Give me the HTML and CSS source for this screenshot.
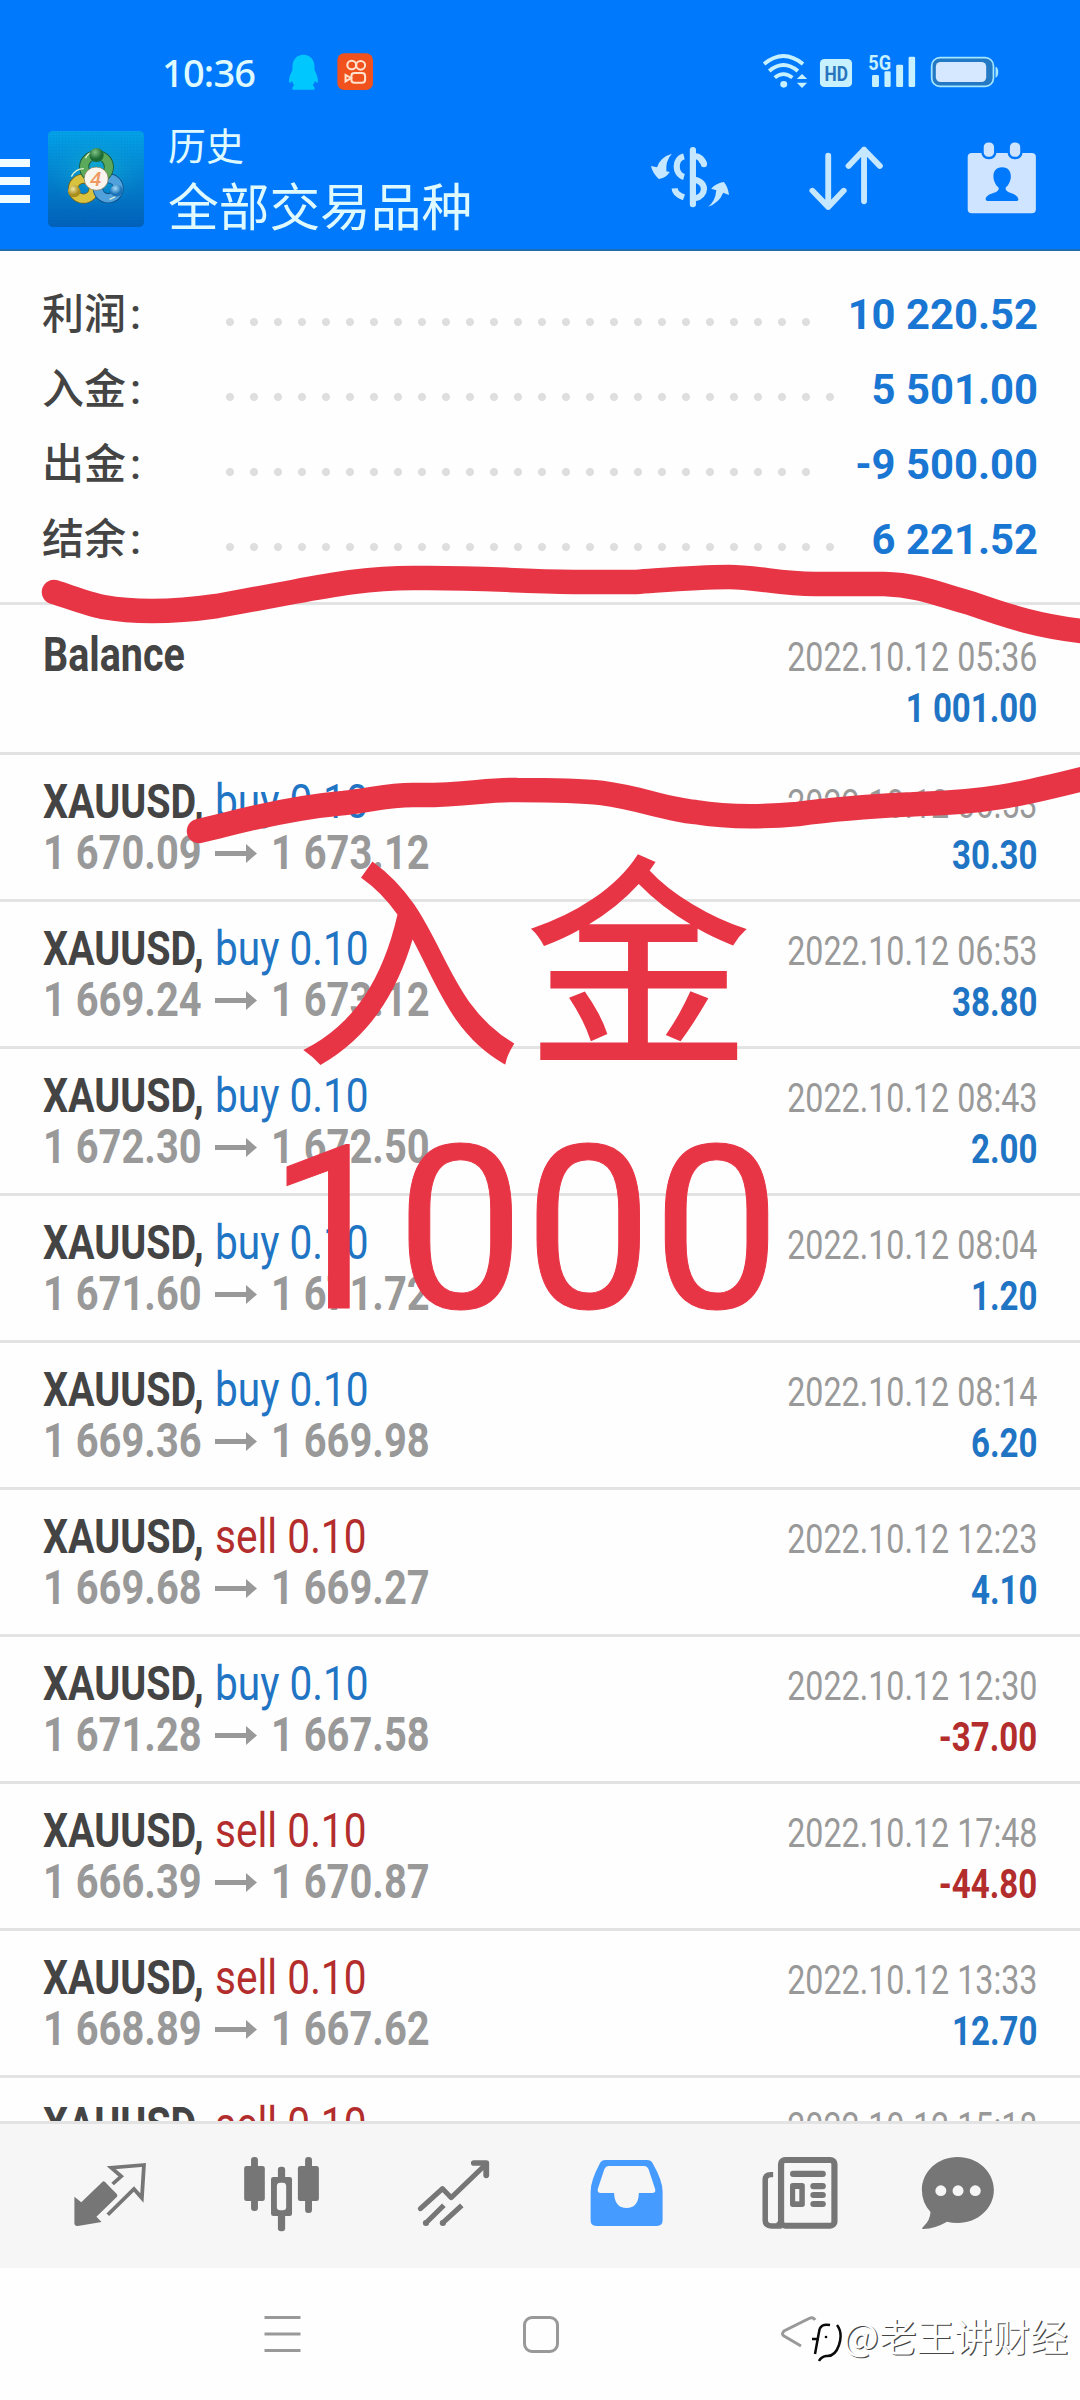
FILE: index.html
```html
<!DOCTYPE html>
<html lang="zh-CN">
<head>
<meta charset="utf-8">
<title>历史</title>
<link rel="stylesheet" href="styles.css">
</head>
<body>
<div class="screen">
<header class="top">
  <div class="status">
    <span class="clock">10:36</span>
    <svg class="qq" viewBox="835 70 93 114" preserveAspectRatio="none"><path fill="#00c8ff" d="M880 75c-20 0-32 15-32 36v10c-5 10-11 22-10 37 3 3 6-1 9-5 1 6 3 10 7 14-5 3-7 7-6 13h64c1-6-1-10-6-13 4-4 6-8 7-14 3 4 6 8 9 5 1-15-5-27-10-37v-10c0-21-12-36-32-36z"/></svg>
    <svg class="ks" viewBox="978 70 108 114" preserveAspectRatio="none"><rect x="979" y="71" width="104" height="110" rx="20" fill="#f0511d"/><g fill="none" stroke="#ffe3cf" stroke-width="6"><circle cx="1021" cy="106" r="13"/><circle cx="1047" cy="107" r="13"/><rect x="1020" y="130" width="40" height="29" rx="9"/><path d="M1019 145l-16-9v19z"/></g></svg>
    <svg class="signals" viewBox="645 66 690 114" preserveAspectRatio="none">
      <g fill="none" stroke="#c8f1ff" stroke-width="11"><path d="M651 102q56-48 113 0"/><path d="M666 123q41-36 83 0"/><path d="M682 143q25-21 51 0"/></g>
      <circle cx="708" cy="163" r="10" fill="#c8f1ff"/>
      <path fill="#c8f1ff" d="M761 132l15 15h-30zM761 174l15-16h-30z"/>
      <rect x="813" y="87" width="93" height="84" rx="13" fill="#c8f1ff"/>
      <text class="hd" x="826" y="152" textLength="68" lengthAdjust="spacingAndGlyphs">HD</text>
      <text class="fiveg" x="953" y="120" textLength="66" lengthAdjust="spacingAndGlyphs">5G</text>
      <g fill="#c8f1ff"><rect x="964" y="135" width="20" height="36" rx="4"/><rect x="1000" y="124" width="18" height="47" rx="4"/><rect x="1034" y="104" width="20" height="67" rx="4"/><rect x="1070" y="80" width="19" height="91" rx="4"/></g>
      <rect x="1137" y="83" width="179" height="86" rx="24" fill="#2379c4" stroke="#a5e6ff" stroke-width="5"/>
      <rect x="1149" y="96" width="146" height="60" rx="14" fill="#d6e8ff"/>
      <path d="M1322 110q8 2 8 16t-8 17z" fill="#a5e6ff"/>
    </svg>
  </div>
  <div class="toolbar">
    <div class="menu"><i></i><i></i><i></i></div>
    <svg class="logo" viewBox="139 303 279 288" preserveAspectRatio="none">
      <defs>
        <linearGradient id="bg" x1="0" y1="0" x2="0" y2="1"><stop offset="0" stop-color="#02a3ea"/><stop offset=".55" stop-color="#027dc9"/><stop offset="1" stop-color="#005fb9"/></linearGradient>
        <radialGradient id="glow"><stop offset="0" stop-color="#13b6d0" stop-opacity=".8"/><stop offset="1" stop-color="#0898d8" stop-opacity="0"/></radialGradient>
        <radialGradient id="gr" cx=".4" cy=".3"><stop offset="0" stop-color="#7fc384"/><stop offset="1" stop-color="#1c6a34"/></radialGradient>
        <radialGradient id="ye" cx=".4" cy=".3"><stop offset="0" stop-color="#f0e6a0"/><stop offset="1" stop-color="#a88c1c"/></radialGradient>
        <radialGradient id="bl" cx=".4" cy=".3"><stop offset="0" stop-color="#a5dcf8"/><stop offset="1" stop-color="#1b72b8"/></radialGradient>
        <pattern id="grid" width="9" height="9" patternUnits="userSpaceOnUse"><path d="M0 0h9M0 0v9" stroke="#0b6fb5" stroke-width="1.4" opacity=".45"/></pattern>
      </defs>
      <rect x="139" y="303" width="279" height="288" rx="14" fill="url(#bg)"/>
      <rect x="139" y="303" width="279" height="230" fill="url(#glow)"/>
      <rect x="139" y="303" width="279" height="288" rx="14" fill="url(#grid)"/>
      <circle cx="242" cy="476" r="30" fill="none" stroke="#6e6420" stroke-width="30"/>
      <circle cx="242" cy="476" r="30" fill="none" stroke="#d9c33e" stroke-width="25"/>
      <circle cx="314" cy="475" r="30" fill="none" stroke="#104f88" stroke-width="30"/>
      <circle cx="314" cy="475" r="30" fill="none" stroke="#51a2dc" stroke-width="25"/>
      <circle cx="280" cy="411" r="36" fill="none" stroke="#1c5a35" stroke-width="29"/>
      <circle cx="280" cy="411" r="36" fill="none" stroke="#5ba95a" stroke-width="24"/>
      <path d="M207 440q12-24 36-24M248 385q6-16 20-18M318 508q26-8 30-34" fill="none" stroke="#dff2d0" stroke-width="4"/>
      <circle cx="280" cy="375" r="21" fill="url(#gr)"/><circle cx="215" cy="484" r="18" fill="url(#ye)"/><circle cx="338" cy="482" r="18" fill="url(#bl)"/>
      <circle cx="279" cy="446" r="35" fill="#f8f4ee" stroke="#77714b" stroke-width="2"/>
      <text class="four" x="261" y="467">4</text>
    </svg>
    <div class="titles"><div class="t1">历史</div><div class="t2">全部交易品种</div></div>
    <div class="actions">
      <svg viewBox="290.4 300 290.4 300" preserveAspectRatio="none">
        <g fill="#c5e7ff"><path d="M383 371q-19 21-16 53l10 2q-12 19-32 21-17-16-23-39l18 4q9-31 43-41z"/><path d="M488 530q21-15 24-49l-15-5q15-17 37-20 12 15 15 39l-17-7q-12 31-44 42z"/></g>
        <g fill="none" stroke="#c5e7ff" stroke-width="18"><path d="M418 379c-28 7-28 54 0 62M391 475q1 18 27 27"/><path d="M444 360v163" stroke-linecap="round"/><path d="M448 378q22 1 29 26"/><path stroke-linecap="round" d="M470 392q6 5 6 11"/><path d="M448 449c38 6 36 50 2 56"/></g>
      </svg>
      <svg viewBox="743.4 300 290.4 300" preserveAspectRatio="none"><path d="M837 377v154M791 482l46 49 45-49M941 514V359M896 408l45-49 46 49" fill="none" stroke="#c5e7ff" stroke-width="17" stroke-linecap="round" stroke-linejoin="round"/></svg>
      <svg viewBox="1196.4 300 290.4 300" preserveAspectRatio="none"><rect x="1242" y="369" width="198" height="181" rx="12" fill="#cfe4ff"/><g fill="#cfe4ff" stroke="#0079fc" stroke-width="7"><rect x="1285" y="334" width="37" height="50" rx="17"/><rect x="1361" y="334" width="37" height="50" rx="17"/></g><path d="M1342 412c-34 0-30 45-10 61 2 20-33 12-38 34q0 6 6 6h83q7 0 6-6c-5-22-39-14-37-34 20-16 24-61-10-61z" fill="#0079fc"/></svg>
    </div>
  </div>
</header>

<section class="summary">
  <div class="sum"><span class="label">利润<b>:</b></span><span class="dots dots-25"></span><span class="total">10 220.52</span></div>
  <div class="sum"><span class="label">入金<b>:</b></span><span class="dots"></span><span class="total">5 501.00</span></div>
  <div class="sum"><span class="label">出金<b>:</b></span><span class="dots dots-25"></span><span class="total">-9 500.00</span></div>
  <div class="sum"><span class="label">结余<b>:</b></span><span class="dots"></span><span class="total">6 221.52</span></div>
</section>

<main class="deals">
  <div class="deal first"><div class="line"><span class="sym">Balance</span><span class="date">2022.10.12 05:36</span></div><div class="line"><span class="price"></span><span class="val">1 001.00</span></div></div>
  <div class="deal"><div class="line"><span class="sym">XAUUSD,</span><span class="op buy">buy 0.10</span><span class="date">2022.10.12 06:53</span></div><div class="line"><span class="price">1 670.09</span><svg class="arrow" viewBox="0 0 42 19"><path d="M0 7h31V0l11 9.500-11 9.500v-7H0z"/></svg><span class="price">1 673.12</span><span class="val">30.30</span></div></div>
  <div class="deal"><div class="line"><span class="sym">XAUUSD,</span><span class="op buy">buy 0.10</span><span class="date">2022.10.12 06:53</span></div><div class="line"><span class="price">1 669.24</span><svg class="arrow" viewBox="0 0 42 19"><path d="M0 7h31V0l11 9.500-11 9.500v-7H0z"/></svg><span class="price">1 673.12</span><span class="val">38.80</span></div></div>
  <div class="deal"><div class="line"><span class="sym">XAUUSD,</span><span class="op buy">buy 0.10</span><span class="date">2022.10.12 08:43</span></div><div class="line"><span class="price">1 672.30</span><svg class="arrow" viewBox="0 0 42 19"><path d="M0 7h31V0l11 9.500-11 9.500v-7H0z"/></svg><span class="price">1 672.50</span><span class="val">2.00</span></div></div>
  <div class="deal"><div class="line"><span class="sym">XAUUSD,</span><span class="op buy">buy 0.10</span><span class="date">2022.10.12 08:04</span></div><div class="line"><span class="price">1 671.60</span><svg class="arrow" viewBox="0 0 42 19"><path d="M0 7h31V0l11 9.500-11 9.500v-7H0z"/></svg><span class="price">1 671.72</span><span class="val">1.20</span></div></div>
  <div class="deal"><div class="line"><span class="sym">XAUUSD,</span><span class="op buy">buy 0.10</span><span class="date">2022.10.12 08:14</span></div><div class="line"><span class="price">1 669.36</span><svg class="arrow" viewBox="0 0 42 19"><path d="M0 7h31V0l11 9.500-11 9.500v-7H0z"/></svg><span class="price">1 669.98</span><span class="val">6.20</span></div></div>
  <div class="deal"><div class="line"><span class="sym">XAUUSD,</span><span class="op sell">sell 0.10</span><span class="date">2022.10.12 12:23</span></div><div class="line"><span class="price">1 669.68</span><svg class="arrow" viewBox="0 0 42 19"><path d="M0 7h31V0l11 9.500-11 9.500v-7H0z"/></svg><span class="price">1 669.27</span><span class="val">4.10</span></div></div>
  <div class="deal"><div class="line"><span class="sym">XAUUSD,</span><span class="op buy">buy 0.10</span><span class="date">2022.10.12 12:30</span></div><div class="line"><span class="price">1 671.28</span><svg class="arrow" viewBox="0 0 42 19"><path d="M0 7h31V0l11 9.500-11 9.500v-7H0z"/></svg><span class="price">1 667.58</span><span class="val loss">-37.00</span></div></div>
  <div class="deal"><div class="line"><span class="sym">XAUUSD,</span><span class="op sell">sell 0.10</span><span class="date">2022.10.12 17:48</span></div><div class="line"><span class="price">1 666.39</span><svg class="arrow" viewBox="0 0 42 19"><path d="M0 7h31V0l11 9.500-11 9.500v-7H0z"/></svg><span class="price">1 670.87</span><span class="val loss">-44.80</span></div></div>
  <div class="deal"><div class="line"><span class="sym">XAUUSD,</span><span class="op sell">sell 0.10</span><span class="date">2022.10.12 13:33</span></div><div class="line"><span class="price">1 668.89</span><svg class="arrow" viewBox="0 0 42 19"><path d="M0 7h31V0l11 9.500-11 9.500v-7H0z"/></svg><span class="price">1 667.62</span><span class="val">12.70</span></div></div>
  <div class="deal"><div class="line"><span class="sym">XAUUSD,</span><span class="op sell">sell 0.10</span><span class="date">2022.10.12 15:18</span></div></div>
</main>

<nav class="tabs">
  <svg viewBox="174.2 255 290.4 300" preserveAspectRatio="none"><path fill="#767676" d="M216 410l20 17 61-61q4-4 8 0l34 36q4 5 0 9l-59 59 15 16-69 12q-10 1-10-9z"/><path d="M327 372l25-23-29-26 95-8-6 99-23-27-76 77" fill="none" stroke="#767676" stroke-width="11"/></svg>
  <svg viewBox="673.7 255 290.4 300" preserveAspectRatio="none"><g fill="#767676"><rect x="709" y="318" width="60" height="105" rx="7"/><rect x="729" y="291" width="20" height="162" rx="9"/><rect x="865" y="318" width="61" height="105" rx="7"/><rect x="886" y="291" width="20" height="168" rx="9"/><rect x="787" y="351" width="61" height="117" rx="7"/><rect x="807" y="320" width="21" height="194" rx="9"/></g><rect x="804" y="368" width="27" height="83" rx="10" fill="#f6f6f6"/></svg>
  <svg viewBox="1173.2 255 290.4 300" preserveAspectRatio="none"><g fill="none" stroke="#767676" stroke-width="15"><path stroke-linecap="round" stroke-linejoin="round" d="M1221 446l64-60 25 27 98-97"/><path d="M1376 309h36v37" stroke-width="17" stroke-linecap="round" stroke-linejoin="round"/><path d="M1236 490l53-54M1284 490l57-54"/></g><g fill="#767676"><circle cx="1237" cy="489" r="9"/><circle cx="1286" cy="489" r="9"/></g></svg>
  <svg viewBox="104.5 255 290.4 300" preserveAspectRatio="none"><path fill-rule="evenodd" fill="#459bff" d="M190 300h121q11 0 16 10 29 52 29 85v86q0 17-17 17H163q-16 0-16-17v-86q0-33 27-85 5-10 16-10zM199 318q-8 0-12 9l-19 59q-3 13 9 13h38q2 45 36 45 35 0 36-45h38q13 0 9-13l-19-59q-4-9-12-9z"/></svg>
  <svg viewBox="604 255 290.4 300" preserveAspectRatio="none"><g fill="none" stroke="#767676"><rect x="700" y="300" width="155" height="197" rx="12" stroke-width="18"/><path d="M677 344h-7q-16 0-16 16v120q0 18 18 18h30" stroke-width="16"/></g><g fill="#767676"><path d="M688 485h16v16h-20z"/><rect x="726" y="332" width="104" height="19" rx="9"/><rect x="726" y="369" width="43" height="72" rx="8"/><rect x="785" y="369" width="45" height="19" rx="9"/><rect x="785" y="396" width="45" height="18" rx="9"/><rect x="785" y="423" width="45" height="18" rx="9"/></g><rect x="741" y="387" width="12" height="37" fill="#f6f6f6"/></svg>
  <svg viewBox="1103.5 255 290.4 300" preserveAspectRatio="none"><path fill="#767676" d="M1213 291c58 0 105 44 105 99s-47 99-105 99q-18 0-31-4-35 21-69 22-7-1 0-7 20-18 21-44-25-28-25-66c0-55 46-99 104-99z"/><g fill="#f6f6f6"><circle cx="1164" cy="392" r="16"/><circle cx="1214" cy="392" r="16"/><circle cx="1264" cy="392" r="16"/></g></svg>
</nav>
<footer class="system">
  <svg class="recent" viewBox="0 0 36 36"><path d="M0 1.500h36M0 18h36M0 34.500h36"/></svg>
  <span class="home"></span>
  <svg class="back" viewBox="0 0 36 34"><path d="M34 4q-2-4-7-1L3 15q-3 3 0 5l17 10"/></svg>
</footer>

<svg class="marks" viewBox="0 0 1080 2400">
  <g fill="none" stroke="#e83546" stroke-width="24.500" stroke-linecap="round" stroke-linejoin="round">
    <path d="M54 592C70 597 88 604 103 607C136 613 175 612 217 606L293 592C335 584 370 578 413 578C475 577 510 581 574 582L636 582C665 580 695 577 729 577C756 577 780 584 815 584L884 584C920 585 940 595 970 603C1010 617 1040 627 1090 632"/>
    <path d="M199 831C210 829 210 828 220 826C270 813 310 806 344 803C375 799 390 795 413 795C465 796 485 789 517 790C550 790 575 790 602 793C640 798 665 809 695 812C725 817 765 817 798 814C850 807 880 806 919 804C985 802 1015 796 1090 777"/>
  </g>
</svg>
<div class="note note-cn">入金</div>
<div class="note note-num">1000</div>
<div class="watermark">
  <svg viewBox="0 0 34 44"><path d="M23 4Q12 2 10 12L6 34M5 19h12M25 4q9 4 5 18t-14 14q-6 1-8 5" fill="none" stroke="#fff" stroke-width="5"/><path d="M22 4Q12 2 11 11L7 33M4 18h7M29 4q6 8 2 20t-13 11q-5 1-7 5" fill="none" stroke="#0a0a0a" stroke-width="2.500"/><circle cx="18" cy="16" r="1.300"/></svg>
  <span>@老王讲财经</span>
</div>
</div>
</body>
</html>
```
FILE: styles.css
```css
* { box-sizing: border-box; }
body { margin: 0; background: #fdfdfd; font-family: Roboto, "Noto Sans CJK SC", sans-serif; }
svg { display: block; flex: none; }
.screen { position: relative; width: 1080px; height: 2400px; overflow: hidden; display: flex; flex-direction: column; background: #fefefe; }

.top { height: 251px; flex: none; background: #0079fc; border-bottom: 2px solid #1f6cb0; }
.status { display: flex; height: 112px; padding: 52px 80px 0 162px; align-items: flex-start; color: #dffaff; }
.clock { width: 95px; font: 500 38px/40px "Noto Sans", sans-serif; letter-spacing: -.8px; }
.qq { width: 32px; height: 38px; margin: 1px 0 0 31px; }
.ks { width: 37px; height: 38px; margin: 1px 0 0 17px; }
.signals { width: 238px; height: 38px; margin-left: auto; }
.hd { font: 700 60px Roboto, sans-serif; fill: #2874bd; }
.fiveg { font: 700 58px Roboto, sans-serif; fill: #c8f1ff; }
.toolbar { display: flex; height: 137px; padding-right: 28px; }
.menu { width: 30px; display: flex; flex-direction: column; gap: 10px; padding-top: 47px; }
.menu i { height: 8px; background: #f0fcff; }
.logo { width: 96px; height: 96px; margin: 19px 0 0 18px; }
.four { font: italic 500 60px Roboto, sans-serif; fill: #ee9a62; }
.titles { margin-left: 24px; color: #dffaff; }
.t1 { font-size: 38px; line-height: 56px; padding-top: 7px; }
.t2 { font-size: 50.7px; line-height: 68px; }
.actions { display: flex; gap: 56px; margin: 18px 0 0 auto; }
.actions svg, .tabs svg { width: 100px; height: 100px; }

.summary { height: 351px; flex: none; padding: 26px 42px 0 42px; }
.sum { display: flex; height: 75px; line-height: 75px; font-size: 42px; align-items: baseline; }
.label { width: 184px; color: #444; font-weight: 500; }
.label b { margin-left: 4px; font-weight: 500; }
.dots { width: 624px; height: 8px; transform: translateY(-3px); background: radial-gradient(circle at 4px 4px, #dedede 3.6px, transparent 4.4px) 0 0 / 24px 8px; }
.dots-25 { width: 600px; }
.total { margin-left: auto; color: #1976d2; font-weight: 700; font-size: 41.8px; }

.deals { height: 1519px; flex: none; overflow: hidden; }
.deal { height: 147px; padding: 21px 43px 0; border-top: 3px solid #e3e3e3; }
.first { height: 150px; padding-top: 24px; }
.line { display: flex; height: 51px; line-height: 51px; align-items: baseline; white-space: nowrap; }
.sym, .price, .op { font-size: 48px; line-height: 51px; transform-origin: 0 50%; }
.sym { width: 172px; font-weight: 700; color: #444; transform: scaleX(.822); }
.op { transform: scaleX(.846); }
.buy { color: #1f74c4; }
.sell { color: #b32d2d; }
.price { width: 157px; font-weight: 700; color: #999; transform: scaleX(.83); }
.price:empty::before { content: "\200b"; }
.arrow { width: 42px; height: 19px; margin: 0 14px 0 15px; transform: translateY(-6px); fill: #999; }
.date, .val { font-size: 40px; margin-left: auto; transform-origin: 100% 50%; transform: scaleX(.806); }
.date { color: #999; }
.val { font-weight: 700; color: #1f74c4; transform: scaleX(.826); }
.loss { color: #b32d2d; }

.tabs { height: 147px; flex: none; display: flex; gap: 72px; padding: 21px 60px; background: #f6f6f6; border-top: 3px solid #e3e3e3; }
.system { height: 132px; display: flex; align-items: flex-start; padding: 48px 0 0 264px; }
.system svg { fill: none; stroke: #999; stroke-width: 3; }
.recent { width: 37px; height: 36px; }
.home { width: 36px; height: 37px; margin-left: 222px; border: 3px solid #999; border-radius: 9px; }
.back { width: 36px; height: 34px; margin-left: 222px; }

.marks { position: absolute; left: 0; top: 0; width: 1080px; height: 2400px; }
.note { position: absolute; color: #e83546; white-space: nowrap; line-height: 1; }
.note-cn { left: 296px; top: 858px; font-size: 225px; letter-spacing: 5px; -webkit-text-stroke: 2px #e83546; }
.note-num { left: 268px; top: 1116px; font-size: 228px; -webkit-text-stroke: 1px #e83546; }
.watermark { position: absolute; left: 808px; top: 2305px; display: flex; align-items: center; color: #fff; font: 37.800px/48px "Noto Sans CJK SC", sans-serif; text-shadow: 1.200px 1.200px 0 #444; white-space: nowrap; }
.watermark svg { width: 34px; height: 44px; margin-right: 1px; margin-top: 16px; }
```
